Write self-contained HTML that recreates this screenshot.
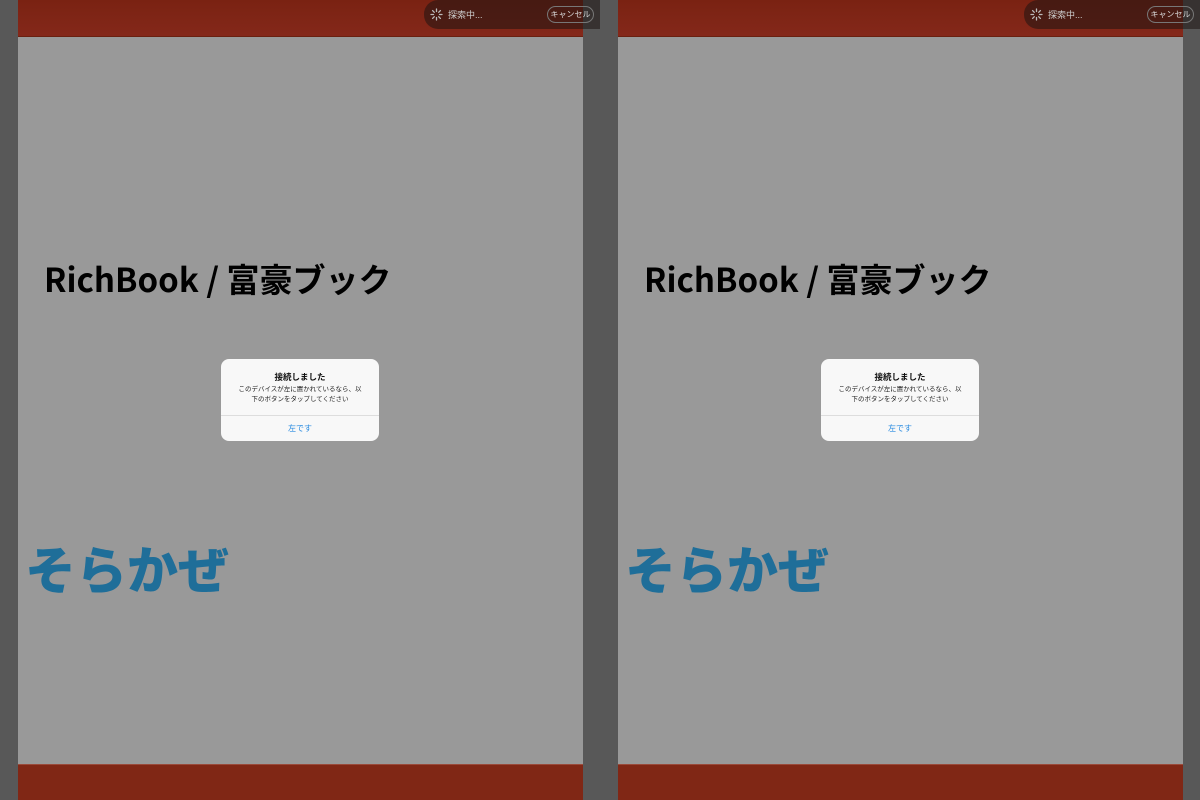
<!DOCTYPE html>
<html><head><meta charset="utf-8"><style>
*{margin:0;padding:0;box-sizing:border-box}
body{width:1200px;height:800px;overflow:hidden;background:#5a5a5a;font-family:"Liberation Sans","Noto Sans CJK JP",sans-serif;position:relative}
.half{position:absolute;top:0;width:600px;height:800px;background:#585858;overflow:hidden}
.page{position:absolute;left:18px;top:0;width:565px;height:800px;background:#999}
.top{position:absolute;left:0;top:0;width:565px;height:37px;background:linear-gradient(#7a2212,#84281a);border-bottom:1px solid #6a2010}
.bot{position:absolute;left:0;top:764px;width:565px;height:36px;background:#802715;border-top:1px solid #9a4a3a}
.title{position:absolute;left:26px;top:255px;font-size:33px;font-weight:bold;color:#000;white-space:nowrap;font-family:"Noto Sans CJK JP",sans-serif;line-height:46px}
.sora{position:absolute;left:7px;top:532px;font-size:51px;font-weight:900;color:#1f6e99;white-space:nowrap;letter-spacing:0px;font-family:"Noto Sans CJK JP",sans-serif;line-height:70px}
.pill{position:absolute;left:424px;top:0;width:200px;height:29px;border-radius:14px;background:rgba(30,20,18,0.55)}
.pill .t{position:absolute;left:24px;top:8px;font-size:9px;color:#ccc}
.pill .c{position:absolute;left:123px;top:6px;width:47px;height:17px;border:1px solid #777;border-radius:9px;font-size:8px;color:#ddd;text-align:center;line-height:15px}
.dlg{position:absolute;left:221px;top:359px;width:158px;height:82px;background:#f8f8f8;border-radius:8px;text-align:center}
.dlg .h{font-size:8.5px;font-weight:bold;margin-top:12px;color:#111}
.dlg .m{font-size:6.5px;line-height:10px;color:#222;margin-top:2px}
.dlg .sep{position:absolute;left:0;top:56px;width:158px;height:1px;background:#ddd}
.dlg .b{position:absolute;left:0;top:64px;width:158px;font-size:8px;color:#2a8be0}
</style></head><body>
<div class="half" style="left:0">
<div class="page"><div class="top"></div><div class="bot"></div>
<div class="title">RichBook / 富豪ブック</div><div class="sora">そらかぜ</div></div>
<div class="pill"><svg style="position:absolute;left:6px;top:8px" width="13" height="13" viewBox="0 0 13 13"><g stroke="#bbb" stroke-width="1.3" stroke-linecap="round"><line x1="6.5" y1="1" x2="6.5" y2="3.5"/><line x1="6.5" y1="9.5" x2="6.5" y2="12"/><line x1="1" y1="6.5" x2="3.5" y2="6.5"/><line x1="9.5" y1="6.5" x2="12" y2="6.5"/><line x1="2.6" y1="2.6" x2="4.3" y2="4.3"/><line x1="8.7" y1="8.7" x2="10.4" y2="10.4"/><line x1="2.6" y1="10.4" x2="4.3" y2="8.7"/><line x1="8.7" y1="4.3" x2="10.4" y2="2.6"/></g></svg><div class="t">探索中...</div><div class="c">キャンセル</div></div>
<div class="dlg"><div class="h">接続しました</div><div class="m">このデバイスが左に置かれているなら、以<br>下のボタンをタップしてください</div><div class="sep"></div><div class="b">左です</div></div>
</div>
<div class="half" style="left:600px">
<div class="page"><div class="top"></div><div class="bot"></div>
<div class="title">RichBook / 富豪ブック</div><div class="sora">そらかぜ</div></div>
<div class="pill"><svg style="position:absolute;left:6px;top:8px" width="13" height="13" viewBox="0 0 13 13"><g stroke="#bbb" stroke-width="1.3" stroke-linecap="round"><line x1="6.5" y1="1" x2="6.5" y2="3.5"/><line x1="6.5" y1="9.5" x2="6.5" y2="12"/><line x1="1" y1="6.5" x2="3.5" y2="6.5"/><line x1="9.5" y1="6.5" x2="12" y2="6.5"/><line x1="2.6" y1="2.6" x2="4.3" y2="4.3"/><line x1="8.7" y1="8.7" x2="10.4" y2="10.4"/><line x1="2.6" y1="10.4" x2="4.3" y2="8.7"/><line x1="8.7" y1="4.3" x2="10.4" y2="2.6"/></g></svg><div class="t">探索中...</div><div class="c">キャンセル</div></div>
<div class="dlg"><div class="h">接続しました</div><div class="m">このデバイスが左に置かれているなら、以<br>下のボタンをタップしてください</div><div class="sep"></div><div class="b">左です</div></div>
</div>
</body></html>
